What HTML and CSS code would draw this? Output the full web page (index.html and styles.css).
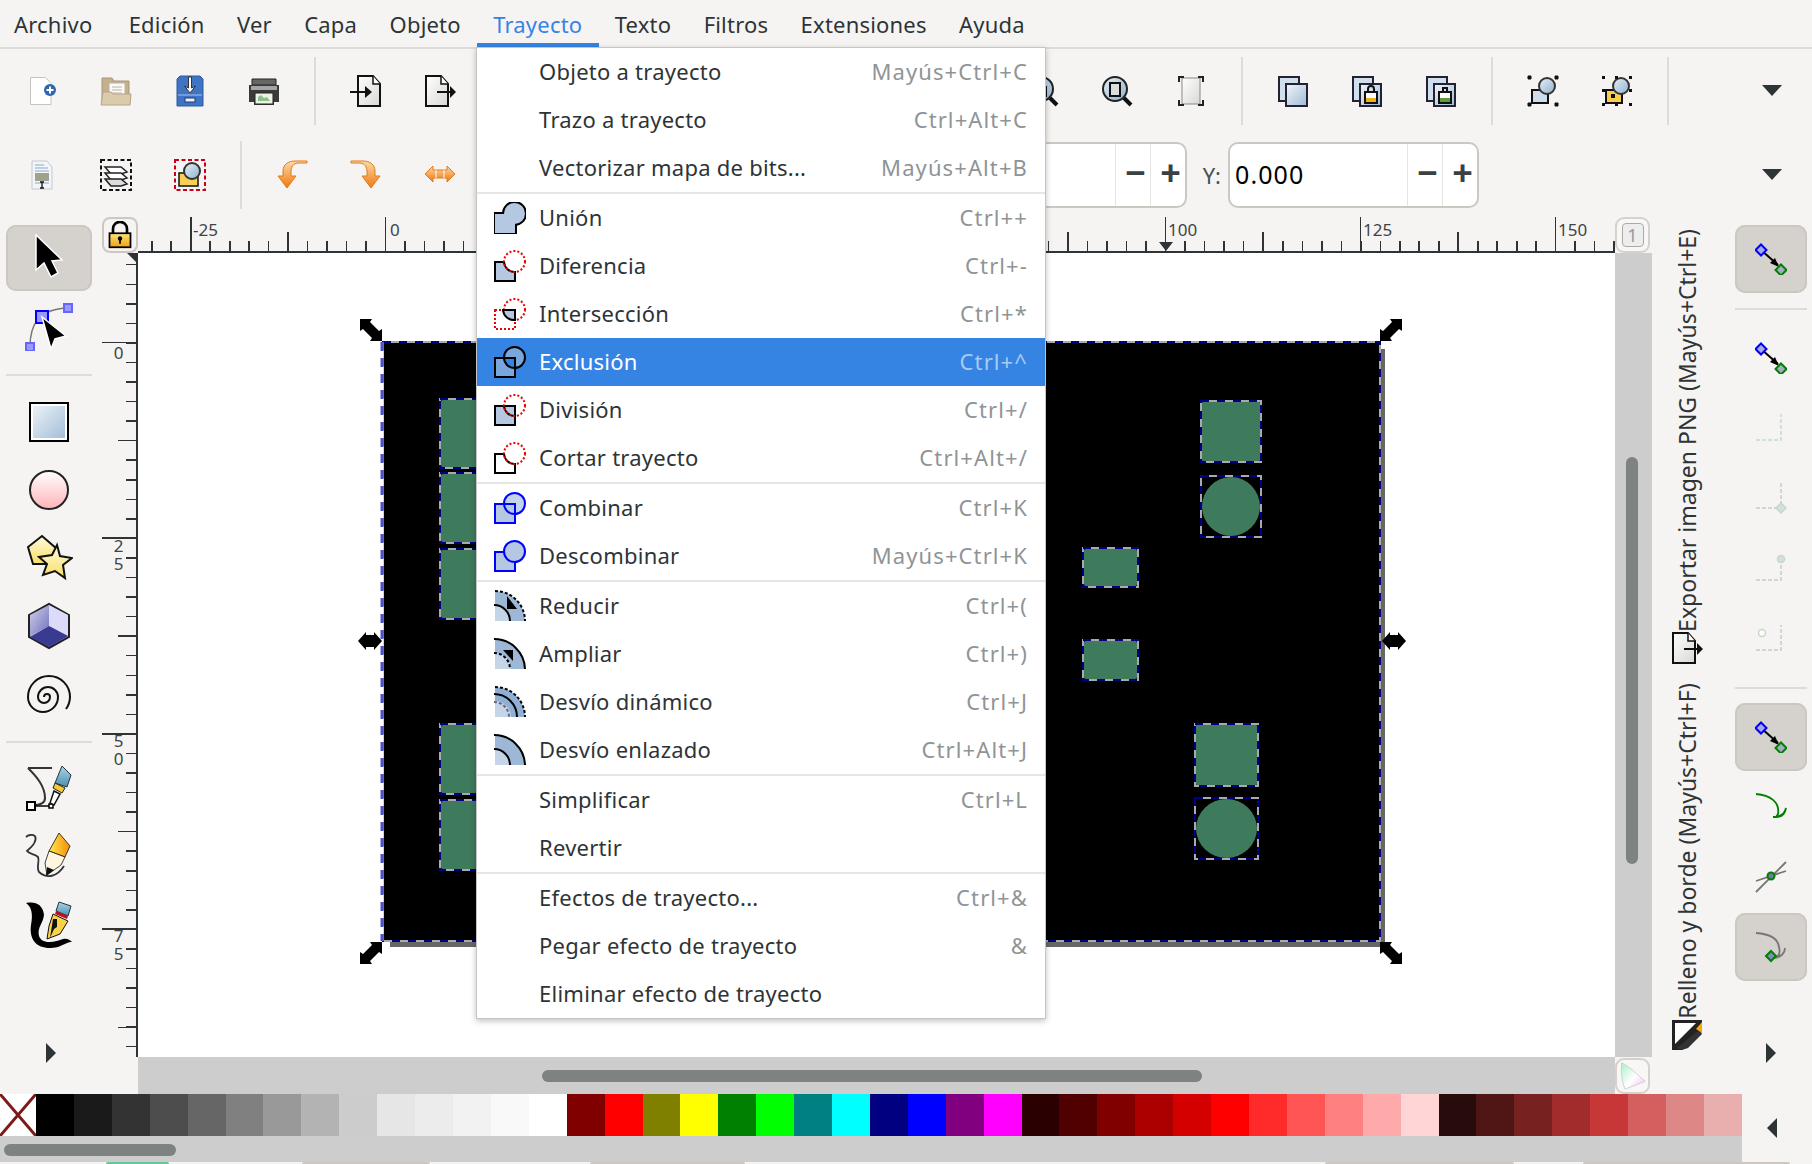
FILE: index.html
```html
<!DOCTYPE html>
<html lang="es">
<head>
    <meta charset="UTF-8">
    <title>Inkscape - menú Trayecto</title>
    <link rel="stylesheet" href="styles.css">
</head>
<body>
<svg class="defs" width="0" height="0">
    <defs>
        <linearGradient id="g-page" x1="0" y1="0" x2="1" y2="1"><stop offset="0" stop-color="#fff"/><stop offset="1" stop-color="#d8d8d4"/></linearGradient>
        <linearGradient id="g-blue" x1="0" y1="0" x2="1" y2="1"><stop offset="0" stop-color="#f2f6fa"/><stop offset="1" stop-color="#9dbad6"/></linearGradient>
        <linearGradient id="g-red" x1="0" y1="0" x2="0" y2="1"><stop offset="0" stop-color="#fff"/><stop offset="1" stop-color="#ffb3b8"/></linearGradient>
        <linearGradient id="g-yellow" x1="0" y1="0" x2="0" y2="1"><stop offset="0" stop-color="#fffbe0"/><stop offset="1" stop-color="#f7de62"/></linearGradient>
        <linearGradient id="g-orange" x1="0" y1="0" x2="0" y2="1"><stop offset="0" stop-color="#fcd9a8"/><stop offset="1" stop-color="#f0780f"/></linearGradient>
        <linearGradient id="g-lock" x1="0" y1="0" x2="0" y2="1"><stop offset="0" stop-color="#fce675"/><stop offset="1" stop-color="#f0a010"/></linearGradient>
        <linearGradient id="g-glass" x1="0" y1="0" x2="1" y2="1"><stop offset="0" stop-color="#e8f0f8"/><stop offset="1" stop-color="#8fb0cf"/></linearGradient>
        <linearGradient id="g-nib" x1="0" y1="0" x2="0" y2="1"><stop offset="0" stop-color="#a9d4e6"/><stop offset="1" stop-color="#4d8fb0"/></linearGradient>
        <linearGradient id="g-pencil" x1="0" y1="0" x2="1" y2="0"><stop offset="0" stop-color="#ffe94a"/><stop offset="1" stop-color="#f58c0a"/></linearGradient>
        <linearGradient id="g-box" x1="0" y1="0" x2="1" y2="1"><stop offset="0" stop-color="#d0d0f0"/><stop offset="1" stop-color="#7070b8"/></linearGradient>

        <!-- barra de comandos -->
        <symbol id="i-new" viewBox="0 0 32 32"><path d="M4.500 2.500h15l5.500 6v21h-20.500z" fill="#fff" stroke="#c4c4c0"/><circle cx="24" cy="15" r="6" fill="#2f66ad"/><path d="M24 11.500v7M20.500 15h7" stroke="#fff" stroke-width="2"/></symbol>
        <symbol id="i-open" viewBox="0 0 32 32"><path d="M2 3h10l2 3h15v20H2z" fill="#c4b08a" stroke="#a89878"/><path d="M9 8h16v14H9z" fill="#fbfaf6" stroke="#b9b4a8"/><path d="M12 12h10M12 15h10M12 18h10" stroke="#b9b4a8"/><path d="M3 17h8l2 2h18l-1 11H1z" fill="#dccbab" stroke="#b3a488"/></symbol>
        <symbol id="i-save" viewBox="0 0 32 32"><path d="M6 1h20l3 3v27H3V4z" fill="#3f74c4" stroke="#2c5aa0"/><path d="M4 20h24" stroke="#a8c4e8"/><rect x="11" y="23" width="10" height="4" fill="#eef" stroke="#1c3c70"/><path d="M14.500 2h3v11l4-2-5.500 7-5.500-7 4 2z" fill="#fff" stroke="#333"/></symbol>
        <symbol id="i-print" viewBox="0 0 32 32"><path d="M4 4h24v6H4z" fill="#666" stroke="#222"/><path d="M1 10h30v17h-5v3H6v-3H1z" fill="#3a3a3a"/><path d="M3 11h26v4H3z" fill="#a4a4a4"/><path d="M7 18h18v11H7z" fill="#eef3e8" stroke="#222"/><path d="M10 22l3-2 3 3 3-1 3 4H10z" fill="#8cc088"/></symbol>
        <symbol id="i-import" viewBox="0 0 32 32"><path d="M8 1h15l7 8v22H8z" fill="url(#g-page)" stroke="#111" stroke-width="2"/><path d="M23 1v8h7" fill="#fff" stroke="#111" stroke-width="1.500"/><path d="M0 17h16" stroke="#111" stroke-width="2"/><path d="M15 11l7 6-7 6z" fill="#111"/></symbol>
        <symbol id="i-export" viewBox="0 0 32 32"><path d="M2 1h15l7 8v22H2z" fill="url(#g-page)" stroke="#111" stroke-width="2"/><path d="M17 1v8h7" fill="#fff" stroke="#111" stroke-width="1.500"/><path d="M13 17h14" stroke="#111" stroke-width="2"/><path d="M26 11l6 6-6 6z" fill="#111"/></symbol>
        <symbol id="i-zoom-sel" viewBox="0 0 32 32"><circle cx="14" cy="14" r="12" fill="url(#g-glass)" stroke="#222" stroke-width="2"/><rect x="9" y="8" width="10" height="13" fill="#ddd" stroke="#111" stroke-width="2"/><path d="M23 23l7 7" stroke="#111" stroke-width="4"/></symbol>
        <symbol id="i-zoom-old" viewBox="0 0 32 32"><circle cx="14" cy="14" r="12" fill="url(#g-glass)" stroke="#222" stroke-width="2"/><rect x="9" y="12" width="10" height="9" fill="#f0b818" stroke="#111" stroke-width="2"/><path d="M23 23l7 7" stroke="#111" stroke-width="4"/></symbol>
        <symbol id="i-fit" viewBox="0 0 32 32"><rect x="7" y="3" width="18" height="26" fill="url(#g-page)" stroke="#888"/><path d="M4 7V2h5M23 2h5v5M28 25v5h-5M9 30H4v-5" fill="none" stroke="#222" stroke-width="2"/></symbol>
        <symbol id="i-dup" viewBox="0 0 32 32"><rect x="2" y="2" width="20" height="24" fill="#cfdfee" stroke="#223" stroke-width="2"/><rect x="9" y="9" width="21" height="22" fill="url(#g-blue)" stroke="#223" stroke-width="2"/></symbol>
        <symbol id="i-dup-lock" viewBox="0 0 32 32"><rect x="2" y="2" width="20" height="24" fill="#cfdfee" stroke="#223" stroke-width="2"/><rect x="9" y="9" width="21" height="22" fill="url(#g-blue)" stroke="#223" stroke-width="2"/><rect x="14" y="17" width="12" height="11" fill="#fff" stroke="#111" stroke-width="2"/><path d="M15 23h10v4H15z" fill="#f2b018"/><path d="M17 17v-3a3 3 0 0 1 6 0v3" fill="none" stroke="#111" stroke-width="2"/></symbol>
        <symbol id="i-dup-green" viewBox="0 0 32 32"><rect x="2" y="2" width="20" height="24" fill="#cfdfee" stroke="#223" stroke-width="2"/><rect x="9" y="9" width="21" height="22" fill="url(#g-blue)" stroke="#223" stroke-width="2"/><rect x="14" y="17" width="12" height="11" fill="#fff" stroke="#111" stroke-width="2"/><path d="M15 23h10v4H15z" fill="#5c9c3c"/><path d="M18 17v-4h4v4" fill="none" stroke="#111" stroke-width="2"/></symbol>
        <symbol id="i-sel-zoom" viewBox="0 0 32 32"><rect x="5" y="15" width="16" height="13" fill="#cfdcea" stroke="#111" stroke-width="2"/><circle cx="20" cy="11" r="8" fill="url(#g-glass)" stroke="#333" stroke-width="2"/><path d="M1 1h3v3H1zM28 1h3v3h-3zM1 28h3v3H1zM28 28h3v3h-3z" fill="#111" stroke="#111"/></symbol>
        <symbol id="i-sel-zoom2" viewBox="0 0 32 32"><rect x="5" y="15" width="16" height="13" fill="#f8cc4c" stroke="#111" stroke-width="2"/><rect x="10" y="19" width="4" height="4" fill="#111"/><circle cx="20" cy="11" r="8" fill="url(#g-glass)" stroke="#333" stroke-width="2"/><path d="M1 1h3v3H1zM28 1h3v3h-3zM1 28h3v3H1zM28 28h3v3h-3zM14 1h3v3h-3zM1 14h3v3H1zM28 14h3v3h-3zM14 28h3v3h-3z" fill="#111"/></symbol>

        <symbol id="i-xml" viewBox="0 0 32 32"><path d="M6 2h15l5 6v22H6z" fill="#f2f6fa" stroke="#c4c8cc"/><path d="M9 6h9M9 9h13M9 12h14M9 24h14" stroke="#8aa8c8"/><rect x="9" y="14" width="14" height="8" fill="#a0a08c"/><path d="M14 23h4M16 23v6M14 29h4" stroke="#111" stroke-width="1.300"/></symbol>
        <symbol id="i-layers" viewBox="0 0 32 32"><rect x="1" y="1" width="30" height="30" fill="none" stroke="#111" stroke-width="2" stroke-dasharray="4 2.500"/><path d="M5 8h16l6 5-6 2H11z" fill="#fff" stroke="#222" stroke-width="1.500"/><path d="M5 14h16l6 5-6 2H11z" fill="#fff" stroke="#222" stroke-width="1.500"/><path d="M5 20h16l6 5-6 2H11z" fill="#ddd" stroke="#222" stroke-width="1.500"/></symbol>
        <symbol id="i-zoom-draw" viewBox="0 0 32 32"><rect x="1" y="1" width="30" height="30" fill="none" stroke="#c8001a" stroke-width="2" stroke-dasharray="4 2.500"/><rect x="5" y="14" width="19" height="13" fill="#f8d054" stroke="#111" stroke-width="1.500"/><circle cx="18" cy="12" r="8" fill="url(#g-glass)" stroke="#333" stroke-width="2"/></symbol>
        <symbol id="i-undo" viewBox="0 0 32 32"><path d="M28 3h-8c-6 0-8 4-8 9v4h5l-9 12-9-12h5v-5c0-7 6-10 12-10h12z" transform="translate(3 1)" fill="url(#g-orange)" stroke="#e07c18"/></symbol>
        <symbol id="i-redo" viewBox="0 0 32 32"><path d="M1 3h8c6 0 8 4 8 9v4h-5l9 12 9-12h-5v-5C25 4 19 1 13 1H1z" transform="translate(0 1)" fill="url(#g-orange)" stroke="#e07c18"/></symbol>
        <symbol id="i-swap" viewBox="0 0 32 32"><path d="M1 15l8-8v4h14V7l8 8-8 8v-4H9v4z" fill="url(#g-orange)" stroke="#e07c18"/><path d="M12 11v8M20 11v8" stroke="#fff"/></symbol>

        <!-- caja de herramientas -->
        <symbol id="t-select" viewBox="0 0 48 48"><path d="M11 1V36l8-7 7 14 7-4-6-12 10-1z" fill="#000" stroke="#fff" stroke-width="1.500"/></symbol>
        <symbol id="t-node" viewBox="0 0 48 48"><path d="M5 44c0-22 8-38 38-39" fill="none" stroke="#777" stroke-width="1.500"/><rect x="11" y="8" width="12" height="12" fill="#9999ff" stroke="#00f" stroke-width="2"/><rect x="39" y="1" width="8" height="8" fill="#9999ff" stroke="#66f" stroke-width="2"/><rect x="1" y="40" width="8" height="8" fill="#9999ff" stroke="#66f" stroke-width="2"/><path d="M17 14l24 19-11 3-4 10z" fill="#000" stroke="#fff" stroke-width="1.500"/></symbol>
        <symbol id="t-rect" viewBox="0 0 48 48"><rect x="5" y="5" width="38" height="38" fill="url(#g-blue)" stroke="#000" stroke-width="2"/><rect x="7" y="7" width="34" height="34" fill="none" stroke="#fff" stroke-width="2"/></symbol>
        <symbol id="t-ellipse" viewBox="0 0 48 48"><circle cx="24" cy="24" r="19" fill="url(#g-red)" stroke="#222" stroke-width="2"/></symbol>
        <symbol id="t-star" viewBox="0 0 48 48"><path d="M17 2L3 13l5 17h15l9-15z" fill="url(#g-yellow)" stroke="#111" stroke-width="2"/><path d="M32 11l3 11 12 2-9 7 2 13-10-7-12 4 4-11-8-7 13-2z" fill="url(#g-yellow)" stroke="#111" stroke-width="2"/></symbol>
        <symbol id="t-box" viewBox="0 0 48 48"><path d="M24 2l20 11v22L24 46 4 35V13z" fill="#b8b8ea" stroke="#222" stroke-width="2"/><path d="M24 24V3L5 13v21l19-10" fill="url(#g-box)"/><path d="M24 24V3l19 10v21z" fill="#dcdcfa"/><path d="M24 24L5 35l19 10 19-11z" fill="#3a3a90"/></symbol>
        <symbol id="t-spiral" viewBox="0 0 48 48"><path d="M19 27A3 3 0 0 1 25 27A6 6 0 0 1 13 27A10 10 0 0 1 33 27A15 15 0 0 1 3 27A21 21 0 0 1 45 27A21 21 0 0 1 41 39" fill="none" stroke="#111" stroke-width="2"/></symbol>
        <symbol id="t-pen" viewBox="0 0 48 48"><path d="M3 3h24M3 3c8 8 17 18 17 30 0 5-5 7-12 7" fill="none" stroke="#333" stroke-width="2"/><rect x="2" y="37" width="8" height="8" fill="#fff" stroke="#000" stroke-width="2"/><path d="M10 41h14" stroke="#000" stroke-width="1.500"/><rect x="24" y="39" width="4" height="4" fill="#fff" stroke="#000" stroke-width="1.500"/><path d="M37 1l9 9-4 12-12-4z" fill="url(#g-nib)" stroke="#234"/><path d="M30 18l10 5-3 5-9-5z" fill="#f6c836" stroke="#222"/><path d="M29 26l6 3-6 11-4-2z" fill="#fff" stroke="#111" stroke-width="1.500"/></symbol>
        <symbol id="t-pencil" viewBox="0 0 48 48"><path d="M10 3c-3-2-7-1-9 1M10 3c2 4-2 10-8 15 2 3 8 3 11 6 2 4-2 10 1 15 8 7 18 5 25-6" fill="none" stroke="#333" stroke-width="1.800"/><path d="M34 0l11 13-5 11-16-6z" fill="url(#g-pencil)" stroke="#111" stroke-width=".800"/><path d="M24 18l16 6-4 8-14 10-2-12z" fill="#fff6e0" stroke="#111" stroke-width=".800"/><path d="M22 34l-1 9 8-6z" fill="#111"/></symbol>
        <symbol id="t-calli" viewBox="0 0 48 48"><path d="M1 2c10-2 17 2 18 12-1 9-7 12-5 21 3 9 17 6 24 3 4-1 7 1 9 3-5-1-11 6-22 6C11 47 4 38 6 24 8 14 7 6 1 2z" fill="#000"/><path d="M34 1l12 4-3 10-12-5z" fill="url(#g-nib)" stroke="#234"/><path d="M31 10l12 5-1 3-12-5z" fill="#c01020"/><path d="M28 13l15 7-8 13-13 5 2-13z" fill="#f8d24a" stroke="#111"/><path d="M28 18h4v8l-3 2-4 9" fill="#111"/></symbol>

        <!-- menu trayecto -->
        <symbol id="p-union" viewBox="0 0 32 32"><g stroke="#000" stroke-width="4" fill="#000"><rect x="1" y="12" width="20" height="19"/><circle cx="20.500" cy="11.500" r="10.500"/></g><g fill="#b4c8e2"><rect x="1" y="12" width="20" height="19"/><circle cx="20.500" cy="11.500" r="10.500"/></g></symbol>
        <symbol id="p-diff" viewBox="0 0 32 32"><path d="M1 12h9a11 11 0 0 0 11 10v9H1z" fill="#b4c8e2" stroke="#000" stroke-width="2"/><circle cx="20.500" cy="11.500" r="10.500" fill="none" stroke="#e00" stroke-width="2" stroke-dasharray="2 2"/></symbol>
        <symbol id="p-inter" viewBox="0 0 32 32"><rect x="1" y="12" width="20" height="19" fill="none" stroke="#e00" stroke-width="2" stroke-dasharray="2 2"/><circle cx="20.500" cy="11.500" r="10.500" fill="none" stroke="#e00" stroke-width="2" stroke-dasharray="2 2"/><path d="M9 12h12v10a11 11 0 0 1-12-10z" fill="#b4c8e2" stroke="#000" stroke-width="2"/></symbol>
        <symbol id="p-excl" viewBox="0 0 32 32"><path d="M1 12h20v19H1z M31 11.500a10.500 10.500 0 1 1-21 0a10.500 10.500 0 1 1 21 0z" fill="#79a6dd" fill-rule="evenodd"/><rect x="1" y="12" width="20" height="19" fill="none" stroke="#000" stroke-width="2"/><circle cx="20.500" cy="11.500" r="10.500" fill="none" stroke="#000" stroke-width="2"/></symbol>
        <symbol id="p-div" viewBox="0 0 32 32"><rect x="1" y="12" width="20" height="19" fill="#b4c8e2" stroke="#000" stroke-width="2"/><path d="M10 12a11 11 0 0 0 11 10" fill="none" stroke="#000" stroke-width="2"/><circle cx="20.500" cy="11.500" r="10.500" fill="none" stroke="#e00" stroke-width="2" stroke-dasharray="2 2"/></symbol>
        <symbol id="p-cut" viewBox="0 0 32 32"><path d="M1 12h9a11 11 0 0 0 11 10v9H1z" fill="#fff" stroke="#000" stroke-width="2"/><circle cx="20.500" cy="11.500" r="10.500" fill="none" stroke="#e00" stroke-width="2" stroke-dasharray="2 2"/></symbol>
        <symbol id="p-comb" viewBox="0 0 32 32"><g fill="#b4c8e2" stroke="#00f" stroke-width="2"><rect x="1" y="12" width="20" height="19"/><circle cx="20.500" cy="11.500" r="10.500" fill="#b4c8e2" fill-opacity=".8"/></g><rect x="1" y="12" width="20" height="19" fill="none" stroke="#00f" stroke-width="2"/></symbol>
        <symbol id="p-uncomb" viewBox="0 0 32 32"><g fill="#b4c8e2" stroke="#00f" stroke-width="2"><rect x="1" y="12" width="20" height="19"/><circle cx="20.500" cy="11.500" r="10.500"/></g></symbol>
        <symbol id="p-inset" viewBox="0 0 32 32"><path d="M1 1a30 30 0 0 1 30 30H1z" fill="#9db8d6"/><path d="M1 15a16 16 0 0 1 16 16H1z" fill="#c4d5e7"/><path d="M1 1a30 30 0 0 1 30 30" fill="none" stroke="#000" stroke-width="2" stroke-dasharray="3 2"/><path d="M0 15a16 16 0 0 1 16 16" fill="none" stroke="#000" stroke-width="2"/><path d="M13 6l10 13H13z" fill="#000"/></symbol>
        <symbol id="p-outset" viewBox="0 0 32 32"><path d="M1 1a30 30 0 0 1 30 30H1z" fill="#9db8d6"/><path d="M1 15a16 16 0 0 1 16 16H1z" fill="#c4d5e7"/><path d="M0 1a31 31 0 0 1 31 30" fill="none" stroke="#000" stroke-width="2"/><path d="M0 15a16 16 0 0 1 16 16" fill="none" stroke="#000" stroke-width="2" stroke-dasharray="3 2"/><path d="M9 12h10v11z" fill="#000"/></symbol>
        <symbol id="p-dyn" viewBox="0 0 32 32"><path d="M1 1a30 30 0 0 1 30 30H1z" fill="#8fb0d4"/><path d="M1 15a16 16 0 0 1 16 16H1z" fill="#c4d5e7"/><path d="M1 1a30 30 0 0 1 30 30" fill="none" stroke="#000" stroke-width="2" stroke-dasharray="3 2"/><path d="M0 8a23 23 0 0 1 23 23" fill="none" stroke="#000" stroke-width="2"/><path d="M0 16a15 15 0 0 1 15 15" fill="none" stroke="#667" stroke-width="2" stroke-dasharray="3 2"/></symbol>
        <symbol id="p-link" viewBox="0 0 32 32"><path d="M1 1a30 30 0 0 1 30 30H1z" fill="#9db8d6"/><path d="M1 15a16 16 0 0 1 16 16H1z" fill="#c4d5e7"/><path d="M0 1a31 31 0 0 1 31 30" fill="none" stroke="#000" stroke-width="2"/><path d="M0 15a16 16 0 0 1 16 16" fill="none" stroke="#000" stroke-width="2"/></symbol>

        <!-- ajuste -->
        <symbol id="s-snap" viewBox="0 0 32 32"><path d="M6 7l17 15" stroke="#000" stroke-width="2"/><path d="M24 24l-9-4 5-5z" fill="#000"/><path d="M6 1.500l5.500 5.500-5.500 5.500L.5 7z" fill="#a8a8e8" stroke="#00f" stroke-width="2"/><path d="M26 21.500l5.500 5.500-5.500 5.500-5.500-5.500z" fill="#a8a8c8" stroke="#008000" stroke-width="2"/></symbol>
        <symbol id="s-l1" viewBox="0 0 32 32"><path d="M1 28h25V2" fill="none" stroke="#c2dcc2" stroke-width="1.500" stroke-dasharray="4 2"/></symbol>
        <symbol id="s-l2" viewBox="0 0 32 32"><path d="M1 26h25M26 1v30" fill="none" stroke="#c8cac8" stroke-width="1.500" stroke-dasharray="4 2"/><path d="M26 21l5 5-5 5-5-5z" fill="#d8dce8" stroke="#c2dcc2" stroke-width="1.500"/></symbol>
        <symbol id="s-l3" viewBox="0 0 32 32"><path d="M1 28h25V3" fill="none" stroke="#c8cac8" stroke-width="1.500" stroke-dasharray="4 2"/><circle cx="26" cy="7" r="3.500" fill="#d8dce8" stroke="#c2dcc2" stroke-width="1.500"/></symbol>
        <symbol id="s-l4" viewBox="0 0 32 32"><path d="M1 28h25V3" fill="none" stroke="#c8cac8" stroke-width="1.500" stroke-dasharray="4 2"/><circle cx="7" cy="11" r="3.500" fill="#fff" stroke="#c2dcc2" stroke-width="1.500"/></symbol>
        <symbol id="s-curve" viewBox="0 0 32 32"><path d="M1 3c14 1 24 8 22 20l-2 3c5 0 9-3 10-9-1 5-5 9-13 9" fill="none" stroke="#008000" stroke-width="1.800"/></symbol>
        <symbol id="s-cross" viewBox="0 0 32 32"><path d="M1 31L31 1M1 20l30-10" stroke="#777" stroke-width="1.800"/><circle cx="16" cy="15" r="3.500" fill="#77a" stroke="#008000" stroke-width="2"/></symbol>
        <symbol id="s-smooth" viewBox="0 0 32 32"><path d="M1 2c14 1 22 6 23 14 1 4 1 8-2 10M30 17c0 5-4 9-10 10" fill="none" stroke="#777" stroke-width="1.800"/><path d="M16 20l5 5-5 5-5-5z" fill="#8888c0" stroke="#008000" stroke-width="2"/></symbol>
        <symbol id="d-fill" viewBox="0 0 32 32"><path d="M1 1h30v10L11 31H1z" fill="#222"/><path d="M4 4h21L4 25z" fill="#fff"/><path d="M6 29l18-15 5-3 2 4-14 14-6 2z" fill="#333"/><path d="M25 10l6-7v11z" fill="#f4a810"/></symbol>
    </defs>
</svg>

<div class="app">
    <nav class="menubar">
        <span class="menubar-item">Archivo</span>
        <span class="menubar-item">Edición</span>
        <span class="menubar-item">Ver</span>
        <span class="menubar-item">Capa</span>
        <span class="menubar-item">Objeto</span>
        <span class="menubar-item active">Trayecto</span>
        <span class="menubar-item">Texto</span>
        <span class="menubar-item">Filtros</span>
        <span class="menubar-item">Extensiones</span>
        <span class="menubar-item">Ayuda</span>
    </nav>

    <div class="toolbar">
        <button class="tool"><svg class="ic"><use href="#i-new"/></svg></button>
        <button class="tool"><svg class="ic"><use href="#i-open"/></svg></button>
        <button class="tool"><svg class="ic"><use href="#i-save"/></svg></button>
        <button class="tool"><svg class="ic"><use href="#i-print"/></svg></button>
        <i class="vsep"></i>
        <button class="tool"><svg class="ic"><use href="#i-import"/></svg></button>
        <button class="tool"><svg class="ic"><use href="#i-export"/></svg></button>
        <div class="under-menu-a"></div>
        <button class="tool"><svg class="ic"><use href="#i-zoom-old"/></svg></button>
        <button class="tool"><svg class="ic"><use href="#i-zoom-sel"/></svg></button>
        <button class="tool"><svg class="ic"><use href="#i-fit"/></svg></button>
        <i class="vsep"></i>
        <button class="tool"><svg class="ic"><use href="#i-dup"/></svg></button>
        <button class="tool"><svg class="ic"><use href="#i-dup-lock"/></svg></button>
        <button class="tool"><svg class="ic"><use href="#i-dup-green"/></svg></button>
        <i class="vsep"></i>
        <button class="tool"><svg class="ic"><use href="#i-sel-zoom"/></svg></button>
        <button class="tool"><svg class="ic"><use href="#i-sel-zoom2"/></svg></button>
        <i class="vsep"></i>
        <b class="overflow"></b>
    </div>

    <div class="toolbar toolbar-second">
        <button class="tool"><svg class="ic"><use href="#i-xml"/></svg></button>
        <button class="tool"><svg class="ic"><use href="#i-layers"/></svg></button>
        <button class="tool"><svg class="ic"><use href="#i-zoom-draw"/></svg></button>
        <i class="vsep"></i>
        <button class="tool"><svg class="ic"><use href="#i-undo"/></svg></button>
        <button class="tool"><svg class="ic"><use href="#i-redo"/></svg></button>
        <button class="tool"><svg class="ic"><use href="#i-swap"/></svg></button>
        <div class="under-menu-b"></div>
        <div class="spin spin-x"><span class="spin-value"></span><span class="spin-btn">−</span><span class="spin-btn">+</span></div>
        <label class="spin-label">Y:</label>
        <div class="spin"><span class="spin-value">0.000</span><span class="spin-btn">−</span><span class="spin-btn">+</span></div>
        <b class="overflow"></b>
    </div>

    <div class="workspace">
        <aside class="toolbox">
            <button class="tbtn on"><svg class="ic-lg"><use href="#t-select"/></svg></button>
            <button class="tbtn"><svg class="ic-lg"><use href="#t-node"/></svg></button>
            <i class="hsep"></i>
            <button class="tbtn"><svg class="ic-lg"><use href="#t-rect"/></svg></button>
            <button class="tbtn"><svg class="ic-lg"><use href="#t-ellipse"/></svg></button>
            <button class="tbtn"><svg class="ic-lg"><use href="#t-star"/></svg></button>
            <button class="tbtn"><svg class="ic-lg"><use href="#t-box"/></svg></button>
            <button class="tbtn"><svg class="ic-lg"><use href="#t-spiral"/></svg></button>
            <i class="hsep"></i>
            <button class="tbtn"><svg class="ic-lg"><use href="#t-pen"/></svg></button>
            <button class="tbtn"><svg class="ic-lg"><use href="#t-pencil"/></svg></button>
            <button class="tbtn"><svg class="ic-lg"><use href="#t-calli"/></svg></button>
            <b class="more-right"></b>
        </aside>

        <section class="canvas-grid">
            <div class="corner-lock">
                <svg viewBox="0 0 32 32" class="lock"><path d="M8 15V9a8 8 0 0 1 16 0v6" fill="none" stroke="#000" stroke-width="3"/><rect x="4" y="14" width="24" height="16" fill="url(#g-lock)" stroke="#000" stroke-width="2"/><circle cx="16" cy="20" r="2.500"/><path d="M15 20h2v6h-2z"/></svg>
            </div>
            <div class="hruler">
                <span class="hlabel lb-m25">-25</span>
                <span class="hlabel lb-0">0</span>
                <span class="hlabel lb-100">100</span>
                <span class="hlabel lb-125">125</span>
                <span class="hlabel lb-150">150</span>
                <i class="pointer-mark"></i>
            </div>
            <div class="corner-zoom"><span class="zoom-one">1</span></div>

            <div class="vruler">
                <i class="origin-mark"></i>
                <span class="vlabel vl-0">0</span>
                <span class="vlabel vl-25">25</span>
                <span class="vlabel vl-50">50</span>
                <span class="vlabel vl-75">75</span>
            </div>
            <div class="canvas">
                <svg class="drawing" viewBox="138 253 1477 804">
                    <defs>
                        <path id="cue-paths" d="M383 342H1380V941H383Z M440 399H520V468H440Z M440 473H520V543H440Z M440 549H520V619H440Z M440 724H520V794H440Z M440 800H520V870H440Z M1201 401H1261V462H1201Z M1201 476H1261V537H1201Z M1083 548H1138V587H1083Z M1083 640H1138V680H1083Z M1195 724H1258V786H1195Z M1195 798H1258V859H1195Z"/>
                        <path id="h-diag" d="M0 0H12L10 3 19 12 22 10V22H10L12 19 3 10 0 12Z"/>
                        <path id="h-side" d="M0 9L8 0V3H16V0L24 9 16 18V15H8V18Z"/>
                    </defs>
                    <rect x="390" y="349" width="995" height="598" fill="#666"/>
                    <rect x="383" y="342" width="997" height="599" fill="#000"/>
                    <g class="shapes">
                        <rect x="441" y="400" width="78" height="67" rx="2"/>
                        <rect x="441" y="474" width="78" height="68" rx="2"/>
                        <rect x="441" y="550" width="78" height="68" rx="2"/>
                        <rect x="441" y="725" width="78" height="68" rx="2"/>
                        <rect x="441" y="801" width="78" height="68" rx="2"/>
                        <rect x="1202" y="402" width="58" height="59" rx="1"/>
                        <ellipse cx="1231" cy="506.500" rx="29" ry="29.500"/>
                        <rect x="1084" y="549" width="53" height="37" rx="2"/>
                        <rect x="1084" y="641" width="53" height="38" rx="2"/>
                        <rect x="1196" y="725" width="61" height="60" rx="1"/>
                        <ellipse cx="1226.500" cy="828.500" rx="30.500" ry="29.500"/>
                    </g>
                    <use href="#cue-paths" class="cue-grey"/>
                    <use href="#cue-paths" class="cue-navy"/>
                    <path class="edge-white" d="M383 342V941"/>
                    <path class="edge-blue" d="M383 342V941"/>
                    <g class="handles">
                        <use href="#h-diag" x="360" y="319"/>
                        <use href="#h-diag" transform="translate(1402 319) scale(-1 1)"/>
                        <use href="#h-diag" transform="translate(382 942) scale(-1 1)"/>
                        <use href="#h-diag" x="1380" y="942"/>
                        <use href="#h-side" x="358" y="632"/>
                        <use href="#h-side" x="1382" y="632"/>
                    </g>
                </svg>
            </div>
            <div class="vscroll"><i class="vthumb"></i></div>

            <div class="grid-blank"></div>
            <div class="hscroll"><i class="hthumb"></i></div>
            <div class="corner-color">
                <svg viewBox="0 0 32 32" class="gamut"><defs><linearGradient id="g-gamut" x1="0" y1="0" x2="1" y2="1"><stop offset="0" stop-color="#a8f0c8"/><stop offset=".55" stop-color="#fff"/><stop offset="1" stop-color="#f4b8f8"/></linearGradient></defs><path d="M3 1C10 3 22 16 30 22L7 31C3 22 2 10 3 1Z" fill="url(#g-gamut)" stroke="#ccc"/></svg>
            </div>
        </section>

        <div class="dock">
            <div class="dock-tab tab-export"><span class="dock-text">Exportar imagen PNG (Mayús+Ctrl+E)</span><svg class="ic"><use href="#i-export"/></svg></div>
            <div class="dock-tab tab-fill"><span class="dock-text">Relleno y borde (Mayús+Ctrl+F)</span><svg class="ic"><use href="#d-fill"/></svg></div>
        </div>

        <aside class="snapbar">
            <button class="sbtn on first"><svg class="ic"><use href="#s-snap"/></svg></button>
            <i class="hsep snap-sep"></i>
            <button class="sbtn"><svg class="ic"><use href="#s-snap"/></svg></button>
            <button class="sbtn"><svg class="ic"><use href="#s-l1"/></svg></button>
            <button class="sbtn"><svg class="ic"><use href="#s-l2"/></svg></button>
            <button class="sbtn"><svg class="ic"><use href="#s-l3"/></svg></button>
            <button class="sbtn"><svg class="ic"><use href="#s-l4"/></svg></button>
            <i class="hsep snap-sep2"></i>
            <button class="sbtn on"><svg class="ic"><use href="#s-snap"/></svg></button>
            <button class="sbtn"><svg class="ic"><use href="#s-curve"/></svg></button>
            <button class="sbtn"><svg class="ic"><use href="#s-cross"/></svg></button>
            <button class="sbtn on"><svg class="ic"><use href="#s-smooth"/></svg></button>
            <b class="more-right snap-more"></b>
        </aside>
    </div>

    <div class="palette-row">
        <div class="palette-col">
            <div class="palette">
                <span class="swatch none"><svg viewBox="0 0 36 42" preserveAspectRatio="none"><path d="M0 0L36 42M36 0L0 42" stroke="#7d1a1a" stroke-width="3"/></svg></span>
                <span class="swatch s000"></span><span class="swatch s1a"></span><span class="swatch s33"></span><span class="swatch s4d"></span><span class="swatch s66"></span><span class="swatch s80"></span><span class="swatch s99"></span><span class="swatch sb3"></span><span class="swatch scc"></span><span class="swatch se6"></span><span class="swatch sec"></span><span class="swatch sf2"></span><span class="swatch sf9"></span><span class="swatch sff"></span>
                <span class="swatch maroon"></span><span class="swatch red"></span><span class="swatch olive"></span><span class="swatch yellow"></span><span class="swatch green"></span><span class="swatch lime"></span><span class="swatch teal"></span><span class="swatch cyan"></span><span class="swatch navy"></span><span class="swatch blue"></span><span class="swatch purple"></span><span class="swatch magenta"></span>
                <span class="swatch r1"></span><span class="swatch r2"></span><span class="swatch r3"></span><span class="swatch r4"></span><span class="swatch r5"></span><span class="swatch r6"></span><span class="swatch r7"></span><span class="swatch r8"></span><span class="swatch r9"></span><span class="swatch r10"></span><span class="swatch r11"></span>
                <span class="swatch m1"></span><span class="swatch m2"></span><span class="swatch m3"></span><span class="swatch m4"></span><span class="swatch m5"></span><span class="swatch m6"></span><span class="swatch m7"></span><span class="swatch m8"></span>
            </div>
            <div class="palette-scroll"><i class="pthumb"></i></div>
        </div>
        <div class="palette-side"><b class="more-left"></b></div>
    </div>

    <div class="status-stub">
        <i class="stub stub-green"></i><i class="stub stub-a"></i><i class="stub stub-b"></i><i class="stub stub-c"></i><i class="stub stub-d"></i>
    </div>

    <!-- menu desplegado -->
    <div class="menu">
        <div class="menu-item"><span class="mi"></span><span class="label">Objeto a trayecto</span><span class="accel">Mayús+Ctrl+C</span></div>
        <div class="menu-item"><span class="mi"></span><span class="label">Trazo a trayecto</span><span class="accel">Ctrl+Alt+C</span></div>
        <div class="menu-item"><span class="mi"></span><span class="label">Vectorizar mapa de bits...</span><span class="accel">Mayús+Alt+B</span></div>
        <div class="menu-sep"></div>
        <div class="menu-item"><svg class="mi"><use href="#p-union"/></svg><span class="label">Unión</span><span class="accel">Ctrl++</span></div>
        <div class="menu-item"><svg class="mi"><use href="#p-diff"/></svg><span class="label">Diferencia</span><span class="accel">Ctrl+-</span></div>
        <div class="menu-item"><svg class="mi"><use href="#p-inter"/></svg><span class="label">Intersección</span><span class="accel">Ctrl+*</span></div>
        <div class="menu-item hl"><svg class="mi"><use href="#p-excl"/></svg><span class="label">Exclusión</span><span class="accel">Ctrl+^</span></div>
        <div class="menu-item"><svg class="mi"><use href="#p-div"/></svg><span class="label">División</span><span class="accel">Ctrl+/</span></div>
        <div class="menu-item"><svg class="mi"><use href="#p-cut"/></svg><span class="label">Cortar trayecto</span><span class="accel">Ctrl+Alt+/</span></div>
        <div class="menu-sep"></div>
        <div class="menu-item"><svg class="mi"><use href="#p-comb"/></svg><span class="label">Combinar</span><span class="accel">Ctrl+K</span></div>
        <div class="menu-item"><svg class="mi"><use href="#p-uncomb"/></svg><span class="label">Descombinar</span><span class="accel">Mayús+Ctrl+K</span></div>
        <div class="menu-sep"></div>
        <div class="menu-item"><svg class="mi"><use href="#p-inset"/></svg><span class="label">Reducir</span><span class="accel">Ctrl+(</span></div>
        <div class="menu-item"><svg class="mi"><use href="#p-outset"/></svg><span class="label">Ampliar</span><span class="accel">Ctrl+)</span></div>
        <div class="menu-item"><svg class="mi"><use href="#p-dyn"/></svg><span class="label">Desvío dinámico</span><span class="accel">Ctrl+J</span></div>
        <div class="menu-item"><svg class="mi"><use href="#p-link"/></svg><span class="label">Desvío enlazado</span><span class="accel">Ctrl+Alt+J</span></div>
        <div class="menu-sep"></div>
        <div class="menu-item"><span class="mi"></span><span class="label">Simplificar</span><span class="accel">Ctrl+L</span></div>
        <div class="menu-item"><span class="mi"></span><span class="label">Revertir</span></div>
        <div class="menu-sep"></div>
        <div class="menu-item"><span class="mi"></span><span class="label">Efectos de trayecto...</span><span class="accel">Ctrl+&amp;</span></div>
        <div class="menu-item"><span class="mi"></span><span class="label">Pegar efecto de trayecto</span><span class="accel">&amp;</span></div>
        <div class="menu-item"><span class="mi"></span><span class="label">Eliminar efecto de trayecto</span></div>
    </div>
</div>
</body>
</html>
```
FILE: styles.css
```css
html, body {
    margin: 0;
    padding: 0;
    overflow: hidden;
}
body {
    font-family: "Noto Sans", "Open Sans", sans-serif;
    font-size: 22px;
    color: #2e3436;
}
button {
    border: none;
    background: none;
    padding: 0;
    margin: 0;
    display: flex;
    align-items: center;
    justify-content: center;
}
.defs {
    position: absolute;
}
.app {
    position: relative;
    width: 1812px;
    height: 1164px;
    background: #f5f4f2;
    display: flex;
    flex-direction: column;
    overflow: hidden;
}
.ic {
    width: 32px;
    height: 32px;
    display: block;
}
.ic-lg {
    width: 48px;
    height: 48px;
    display: block;
}

/* menu bar */
.menubar {
    height: 47px;
    border-bottom: 2px solid #dedcd9;
    display: flex;
    padding-left: 14px;
    box-sizing: content-box;
}
.menubar-item {
    padding: 0 16.2px;
    line-height: 48px;
    letter-spacing: 0.2px;
}
.menubar-item:first-child {
    padding-left: 0;
    padding-right: 20px;
}
.menubar-item.active {
    color: #3584e4;
    box-shadow: inset 0 -4px 0 #3584e4;
}

/* command bars */
.toolbar {
    height: 83px;
    display: flex;
    align-items: center;
    padding-left: 5px;
}
.toolbar-second {
    height: 81px;
    padding-top: 2px;
}
.tool {
    width: 74px;
    height: 81px;
    flex: none;
}
.vsep {
    width: 2px;
    height: 68px;
    margin: 0 13px;
    background: #dedcd9;
    flex: none;
}
.under-menu-a {
    width: 529px;
    flex: none;
}
.under-menu-b {
    width: 563px;
    flex: none;
}
.overflow {
    position: absolute;
    left: 1762px;
    width: 0;
    height: 0;
    border-left: 10px solid transparent;
    border-right: 10px solid transparent;
    border-top: 11px solid #2e3436;
}
.spin {
    width: 251px;
    height: 66px;
    box-sizing: border-box;
    border: 2px solid #cdc7c2;
    border-radius: 10px;
    background: #fff;
    display: flex;
    flex: none;
}
.spin-x {
    width: 150px;
    margin-left: -3px;
}
.spin-value {
    flex: 1;
    line-height: 60px;
    padding-left: 5px;
    font-size: 25px;
    letter-spacing: 1.1px;
    color: #000;
}
.spin-btn {
    width: 29px;
    padding-left: 5px;
    border-left: 1px solid #e6e4e1;
    text-align: center;
    line-height: 58px;
    font-size: 36px;
    font-weight: 700;
    color: #3b4143;
}
.spin-label {
    width: 34px;
    padding-right: 7px;
    text-align: right;
    flex: none;
    color: #4d5254;
}

/* main area */
.workspace {
    flex: 1;
    display: flex;
    min-height: 0;
}
.toolbox {
    width: 102px;
    display: flex;
    flex-direction: column;
    align-items: flex-start;
    padding-top: 9px;
    position: relative;
}
.tbtn {
    width: 86px;
    height: 68px;
    flex: none;
    border-radius: 10px;
    margin-left: 6px;
}
.tbtn.on {
    background: #d5d1cc;
    box-shadow: inset 0 0 0 2px #cdc7c2;
    height: 66px;
    margin-bottom: 2px;
    margin-top: 1px;
}
.hsep {
    display: block;
    flex: none;
    width: 86px;
    height: 2px;
    margin: 13px 0 12px 6px;
    background: #dedcd9;
}
.more-right {
    position: absolute;
    left: 46px;
    top: 828px;
    width: 0;
    height: 0;
    border-top: 10px solid transparent;
    border-bottom: 10px solid transparent;
    border-left: 10px solid #2e3436;
}

.canvas-grid {
    display: grid;
    grid-template-columns: 36px 1477px 37px;
    grid-template-rows: 38px 804px 37px;
}
.corner-lock {
    margin-top: 2px;
    border: 2px solid #cdc7c2;
    border-radius: 8px;
    background: #f5f4f2;
    display: flex;
    align-items: center;
    justify-content: center;
}
.lock {
    width: 28px;
    height: 28px;
}
.hruler, .vruler {
    position: relative;
    color: #3d4447;
    font-size: 17px;
    overflow: hidden;
}
.hruler {
    border-bottom: 2px solid #2e3436;
    box-sizing: border-box;
    background:
        repeating-linear-gradient(to right, #2e3436 52px, #2e3436 53.5px, transparent 53.5px, transparent 247px) 0 100% / 100% 34px no-repeat,
        repeating-linear-gradient(to right, #2e3436 52px, #2e3436 53.5px, transparent 53.5px, transparent 149.5px) 0 100% / 100% 19px no-repeat,
        repeating-linear-gradient(to right, #2e3436 13px, #2e3436 14.5px, transparent 14.5px, transparent 32.5px) 0 100% / 100% 10px no-repeat;
}
.vruler {
    border-right: 2px solid #2e3436;
    box-sizing: border-box;
    background:
        repeating-linear-gradient(to bottom, #2e3436 89px, #2e3436 90.5px, transparent 90.5px, transparent 284.5px) 100% 0 / 100% 100% no-repeat,
        repeating-linear-gradient(to bottom, #2e3436 89px, #2e3436 90.5px, transparent 90.5px, transparent 186.8px) 100% 0 / 18px 100% no-repeat,
        repeating-linear-gradient(to bottom, #2e3436 11px, #2e3436 12.5px, transparent 12.5px, transparent 30.55px) 100% 0 / 10px 100% no-repeat;
}
.hlabel {
    position: absolute;
    top: 5px;
    line-height: 20px;
}
.lb-m25 { left: 55px; }
.lb-0 { left: 252px; }
.lb-100 { left: 1030px; }
.lb-125 { left: 1225px; }
.lb-150 { left: 1420px; }
.pointer-mark {
    position: absolute;
    left: 1021px;
    top: 27px;
    width: 0;
    height: 0;
    border-left: 7px solid transparent;
    border-right: 7px solid transparent;
    border-top: 9px solid #2e3436;
}
.vlabel {
    position: absolute;
    left: 11px;
    line-height: 11px;
    writing-mode: vertical-lr;
    text-orientation: upright;
    letter-spacing: -5px;
}
.vl-0 { top: 88px; }
.vl-25 { top: 281px; }
.vl-50 { top: 476px; }
.vl-75 { top: 671px; }
.origin-mark {
    position: absolute;
    right: 0;
    top: 0;
    width: 0;
    height: 0;
    border-top: 9px solid #2e3436;
    border-left: 9px solid transparent;
}
.corner-zoom, .corner-color {
    width: 35px;
    box-sizing: border-box;
    border: 2px solid #d5d1cc;
    border-radius: 9px;
    background: #f8f7f5;
    display: flex;
    align-items: center;
    justify-content: center;
}
.corner-zoom {
    margin-top: 2px;
}
.zoom-one {
    width: 22px;
    height: 24px;
    box-sizing: border-box;
    font-size: 18px;
    line-height: 22px;
    text-align: center;
    border: 1px solid #aaa;
    border-radius: 4px;
    color: #999;
    background: #eee;
}
.gamut {
    width: 28px;
    height: 30px;
}
.canvas {
    background: #fff;
    overflow: hidden;
}
.drawing {
    display: block;
    width: 1477px;
    height: 804px;
}
.shapes {
    fill: #3e7a5c;
}
.cue-grey {
    fill: none;
    stroke: #aaa;
    stroke-width: 2;
}
.cue-navy {
    fill: none;
    stroke: #000080;
    stroke-width: 2;
    stroke-dasharray: 8 8;
}
.edge-white {
    stroke: #fff;
    stroke-width: 3;
    transform: translateX(-1px);
}
.edge-blue {
    stroke: #5151c8;
    stroke-width: 3;
    stroke-dasharray: 9 7;
    transform: translateX(-1px);
}
.handles {
    fill: #000;
}
.vscroll {
    background: #cdcdcd;
    position: relative;
}
.vthumb {
    position: absolute;
    left: 11px;
    top: 204px;
    width: 12px;
    height: 407px;
    border-radius: 6px;
    background: #7e8382;
}
.hscroll {
    background: #cdcdcd;
    position: relative;
}
.hthumb {
    position: absolute;
    left: 404px;
    top: 13px;
    width: 660px;
    height: 12px;
    border-radius: 6px;
    background: #7e8382;
}
.corner-color {
    margin-top: 1px;
}

/* dock tabs */
.dock {
    width: 70px;
    padding-right: 8px;
    display: flex;
    flex-direction: column;
    align-items: center;
    padding-top: 14px;
}
.dock-tab {
    display: flex;
    flex-direction: column;
    align-items: center;
}
.tab-fill {
    margin-top: 19px;
}
.dock-text {
    writing-mode: vertical-rl;
    transform: rotate(180deg);
    line-height: 30px;
    font-size: 23px;
}

/* snap bar */
.snapbar {
    width: 82px;
    display: flex;
    flex-direction: column;
    align-items: center;
    position: relative;
}
.sbtn {
    width: 72px;
    height: 70px;
    flex: none;
    border-radius: 10px;
}
.sbtn.on {
    background: #d5d1cc;
    box-shadow: inset 0 0 0 2px #cdc7c2;
    height: 68px;
    margin: 1px 0;
}
.sbtn.first {
    margin-top: 10px;
}
.hsep.snap-sep {
    width: 72px;
    margin: 14px 0 13px;
}
.hsep.snap-sep2 {
    width: 72px;
    margin: 14px 0 13px;
}
.snap-more {
    left: 36px;
    top: 828px;
}

/* palette */
.palette-row {
    height: 68px;
    display: flex;
}
.palette-col {
    width: 1742px;
}
.palette {
    height: 42px;
    display: flex;
}
.swatch {
    flex: 1;
    display: block;
}
.swatch.none {
    flex: 0 0 36px;
    background: #fff;
}
.swatch.none svg {
    display: block;
    width: 100%;
    height: 100%;
}
.s000 { background: #000; }
.s1a { background: #1a1a1a; }
.s33 { background: #333; }
.s4d { background: #4d4d4d; }
.s66 { background: #666; }
.s80 { background: #808080; }
.s99 { background: #999; }
.sb3 { background: #b3b3b3; }
.scc { background: #ccc; }
.se6 { background: #e6e6e6; }
.sec { background: #ececec; }
.sf2 { background: #f2f2f2; }
.sf9 { background: #f9f9f9; }
.sff { background: #fff; }
.maroon { background: #800000; }
.red { background: #f00; }
.olive { background: #808000; }
.yellow { background: #ff0; }
.green { background: #008000; }
.lime { background: #0f0; }
.teal { background: #008080; }
.cyan { background: #0ff; }
.navy { background: #000080; }
.blue { background: #00f; }
.purple { background: #800080; }
.magenta { background: #f0f; }
.r1 { background: #2b0000; }
.r2 { background: #500000; }
.r3 { background: #800000; }
.r4 { background: #a00; }
.r5 { background: #d40000; }
.r6 { background: #f00; }
.r7 { background: #ff2a2a; }
.r8 { background: #f55; }
.r9 { background: #ff8080; }
.r10 { background: #faa; }
.r11 { background: #ffd5d5; }
.m1 { background: #280b0b; }
.m2 { background: #501616; }
.m3 { background: #782121; }
.m4 { background: #a02c2c; }
.m5 { background: #c83737; }
.m6 { background: #d35f5f; }
.m7 { background: #de8787; }
.m8 { background: #e9afaf; }
.palette-scroll {
    height: 26px;
    background: #cdcdcd;
    position: relative;
}
.pthumb {
    position: absolute;
    left: 4px;
    top: 8px;
    width: 172px;
    height: 12px;
    border-radius: 6px;
    background: #7e8382;
}
.palette-side {
    flex: 1;
    position: relative;
}
.more-left {
    position: absolute;
    left: 25px;
    top: 24px;
    width: 0;
    height: 0;
    border-top: 10px solid transparent;
    border-bottom: 10px solid transparent;
    border-right: 10px solid #2e3436;
}

/* bottom strip */
.status-stub {
    height: 2px;
    display: flex;
    background: #f5f4f2;
}
.stub {
    display: block;
    height: 2px;
    border-radius: 2px 2px 0 0;
    background: #cdc7c2;
}
.stub-green { margin-left: 106px; width: 63px; background: #5fc79a; }
.stub-a { margin-left: 133px; width: 128px; }
.stub-b { margin-left: 160px; width: 155px; }
.stub-c { margin-left: 580px; width: 189px; }
.stub-d { margin-left: 69px; width: 207px; }

/* Trayecto dropdown */
.menu {
    position: absolute;
    left: 476px;
    top: 47px;
    width: 568px;
    background: #fff;
    border: 1px solid #c6c5c3;
    box-shadow: 0 2px 6px rgba(0, 0, 0, 0.25);
}
.menu-item {
    height: 48px;
    display: flex;
    align-items: center;
    padding: 0 18px 0 17px;
}
.mi {
    width: 32px;
    height: 32px;
    flex: none;
    margin-right: 13px;
    display: block;
}
.label {
    flex: 1;
    letter-spacing: 0.25px;
    margin-top: -2px;
}
.accel {
    color: #8f9496;
    letter-spacing: 1.1px;
    margin-right: -1px;
    margin-top: -2px;
}
.menu-item.hl {
    background: #3584e4;
    color: #fff;
}
.menu-item.hl .accel {
    color: #a9cbf3;
}
.menu-sep {
    height: 2px;
    background: #e6e6e5;
}
```
